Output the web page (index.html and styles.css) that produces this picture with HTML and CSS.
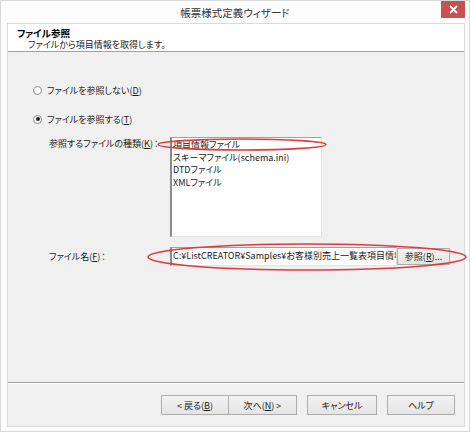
FILE: index.html
```html
<!DOCTYPE html>
<html lang="ja">
<head>
<meta charset="utf-8">
<link rel="stylesheet" href="styles.css">
</head>
<body>
<div class="window">
  <div class="titlebar">
    <span class="tb-side"></span>
    <span class="title">帳票様式定義ウィザード</span>
    <span class="tb-side tb-right">
      <span class="close"><svg width="9" height="9" viewBox="0 0 9 9"><path d="M1 1 L8 8 M8 1 L1 8" stroke="#fff" stroke-width="1.8" fill="none"/></svg></span>
    </span>
  </div>
  <div class="client">
    <div class="header">
      <div class="h-title">ファイル参照</div>
      <div class="h-sub">ファイルから項目情報を取得します。</div>
    </div>
    <div class="body">
      <div class="radio-row r1"><span class="radio"></span><span>ファイルを参照しない(<u>D</u>)</span></div>
      <div class="radio-row r2"><span class="radio checked"></span><span>ファイルを参照する(<u>T</u>)</span></div>
      <div class="row kind">
        <span class="lbl">参照するファイルの種類(<u>K</u>)<span class="colon">：</span></span>
        <div class="listbox">
          <div class="item">項目情報ファイル</div>
          <div class="item">スキーマファイル(schema.ini)</div>
          <div class="item">DTDファイル</div>
          <div class="item">XMLファイル</div>
        </div>
      </div>
      <div class="row file">
        <span class="lbl">ファイル名(<u>F</u>)<span class="colon">：</span></span>
        <div class="field"><span class="field-text">C:¥ListCREATOR¥Samples¥お客様別売上一覧表項目情報.csv</span></div>
        <span class="btn browse">参照(<u>R</u>)...</span>
      </div>
      <svg class="marks" width="470" height="331" viewBox="0 0 470 331">
        <ellipse cx="234" cy="92.5" rx="84" ry="5.5" fill="none" stroke="#e03a3c" stroke-width="1.6"/>
        <ellipse cx="299" cy="205" rx="159" ry="13" fill="none" stroke="#e03a3c" stroke-width="1.6"/>
      </svg>
    </div>
    <div class="footer">
      <span class="btn b1">&lt; 戻る(<u>B</u>)</span>
      <span class="btn b2">次へ(<u>N</u>) &gt;</span>
      <span class="btn b3">キャンセル</span>
      <span class="btn b4">ヘルプ</span>
    </div>
  </div>
</div>
</body>
</html>
```
FILE: styles.css
```css
html, body {
  margin: 0;
  padding: 0;
  background: #ffffff;
}
body {
  font-family: "Noto Sans CJK JP", "Noto Sans", sans-serif;
  font-size: 9px;
  color: #1a1a1a;
  font-feature-settings: "palt";
}
.window {
  width: 470px;
  height: 432px;
  box-sizing: border-box;
  background: #fdfdfd;
  border: 1px solid #d9d9d9;
  display: flex;
  flex-direction: column;
}
.titlebar {
  height: 22px;
  display: grid;
  grid-template-columns: 1fr auto 1fr;
  align-items: start;
}
.title {
  font-size: 10.5px;
  color: #333;
  line-height: 24px;
}
.tb-right {
  display: flex;
  justify-content: flex-end;
  padding-right: 4px;
}
.close {
  width: 24px;
  height: 17px;
  background: #c75050;
  display: flex;
  align-items: center;
  justify-content: center;
}
.client {
  margin: 0 4px 4px 6px;
  flex: 1;
  border: 1px solid #dadada;
  display: flex;
  flex-direction: column;
  background: #f0f0f0;
}
.header {
  height: 28px;
  background: #ffffff;
  border-bottom: 1px solid #a0a0a0;
  padding-left: 9px;
  box-sizing: border-box;
}
.h-title {
  font-weight: bold;
  font-size: 9.5px;
  line-height: 11px;
  padding-top: 4px;
  color: #000;
}
.h-sub {
  padding-left: 11px;
  line-height: 11px;
}
.body {
  position: relative;
  height: 331px;
  box-sizing: border-box;
  border-bottom: 1px solid #a0a0a0;
  padding-top: 32px;
  display: flex;
  flex-direction: column;
}
.radio-row {
  display: flex;
  align-items: center;
  height: 12px;
  padding-left: 25px;
  gap: 5px;
}
.r2 { margin-top: 17px; }
.radio {
  width: 7px;
  height: 7px;
  border: 1px solid #8a8a8a;
  border-radius: 50%;
  background: #fff;
  display: flex;
  align-items: center;
  justify-content: center;
}
.radio.checked::after {
  content: "";
  width: 4px;
  height: 4px;
  border-radius: 50%;
  background: #222;
}
.row {
  display: flex;
  align-items: flex-start;
  padding-left: 41px;
}
.lbl {
  width: 121px;
  flex: none;
  line-height: 12px;
  white-space: nowrap;
}
.colon { margin-left: 1px; }
.kind { margin-top: 12px; }
.kind .lbl { padding-top: 1px; }
.listbox {
  width: 152px;
  height: 100px;
  box-sizing: border-box;
  background: #fff;
  border-top: 1px solid #a0a0a0;
  border-left: 2px solid #8a8a8a;
  border-right: 1px solid #e3e3e3;
  border-bottom: 1px solid #e3e3e3;
  padding: 1px 0 0 1px;
}
.item {
  line-height: 12.5px;
  white-space: nowrap;
}
.file { margin-top: 10px; align-items: flex-start; }
.file .lbl { padding-top: 4px; }
.field {
  width: 227px;
  height: 19px;
  box-sizing: border-box;
  background: #fff;
  border-top: 1px solid #a0a0a0;
  border-left: 2px solid #8a8a8a;
  border-right: 1px solid #e3e3e3;
  border-bottom: 1px solid #e3e3e3;
  white-space: nowrap;
  overflow: hidden;
  line-height: 16px;
  padding-left: 1px;
}
.btn {
  box-sizing: border-box;
  display: flex;
  align-items: center;
  justify-content: center;
  background: linear-gradient(#f2f2f2, #e4e4e4);
  border: 1px solid #adadad;
  white-space: nowrap;
}
.browse {
  width: 53px;
  height: 17px;
  margin-top: 1px;
}
.marks {
  position: absolute;
  left: 0;
  top: 0;
  pointer-events: none;
  overflow: visible;
}
.footer {
  flex: 1;
  border-top: 1px solid #fff;
  display: flex;
  align-items: flex-start;
  padding-top: 11px;
  padding-left: 153px;
}
.footer .btn { height: 20px; }
.b1 { width: 68px; }
.b2 { width: 69px; margin-left: -1px; }
.b3 { width: 70px; margin-left: 10px; }
.b4 { width: 68px; margin-left: 10px; }
```
